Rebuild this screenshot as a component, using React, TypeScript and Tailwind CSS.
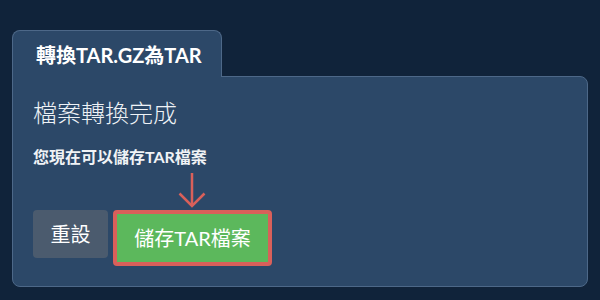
export default function App() {
  const font = { fontFamily: 'Lato, "Noto Sans CJK TC", sans-serif' };
  return (
    <div className="w-[600px] h-[300px] bg-[#10233a] pt-[30px] pl-[12px]" style={font}>
      <div className="flex flex-col">
        <div className="relative z-10 -mb-px w-[210px] h-[47px] bg-[#2c4868] border border-b-0 border-[#4d6888] rounded-t-[8px] pl-[23px] pt-[12px]">
          <div className="text-[20px] leading-[24px] font-bold text-white">轉換TAR.GZ為TAR</div>
        </div>
        <div className="w-[576px] h-[211px] bg-[#2c4868] border border-[#4d6888] rounded-b-[8px] rounded-tr-[8px] pt-[23px] px-[20px]">
          <div className="text-[24px] leading-[26px] font-light text-[#eef2f6]">檔案轉換完成</div>
          <div className="mt-[19px] text-[16px] leading-[24px] font-bold text-[#f0f3f6]">您現在可以儲存TAR檔案</div>
          <svg className="ml-[145px] block" width="28" height="40" viewBox="0 0 28 40">
            <path d="M14 4 V37" stroke="#d9605a" strokeWidth="2.5" fill="none" />
            <path d="M1.5 24.5 L14 37 L26.5 24.5" stroke="#d9605a" strokeWidth="2.5" fill="none" />
          </svg>
          <div className="mt-px flex items-start gap-[5px]">
            <button className="w-[75px] h-[48px] rounded-[4px] bg-[#4b5b6e] text-white text-[20px] leading-[24px]">重設</button>
            <button className="w-[159px] h-[56px] rounded-[4px] border-4 border-[#d9605a] bg-[#5cb85c] text-white text-[20px] leading-[24px]">儲存TAR檔案</button>
          </div>
        </div>
      </div>
    </div>
  );
}
